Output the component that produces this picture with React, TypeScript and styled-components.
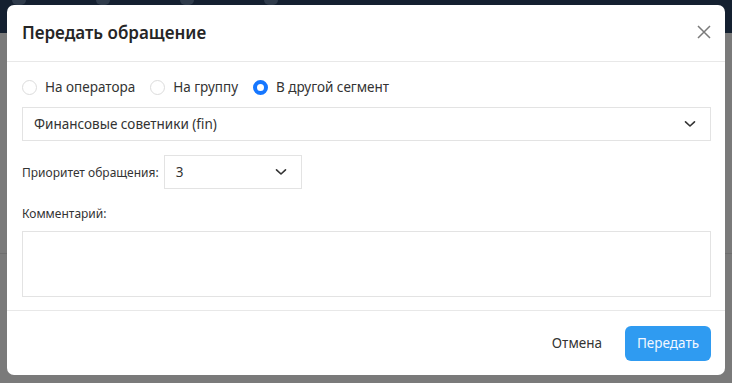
import React from "react";
import styled, { createGlobalStyle } from "styled-components";

const Global = createGlobalStyle`
  html, body { margin: 0; padding: 0; }
  body { font-family: "Segoe UI", "Noto Sans", "Open Sans", sans-serif; width: 732px; height: 383px; overflow: hidden; }
  * { box-sizing: border-box; }
`;

const Page = styled.div`
  position: relative;
  width: 732px;
  height: 383px;
  display: flex;
  flex-direction: column;
  background: #7a7a7a;
`;

const TopBar = styled.div`
  height: 33px;
  background: #142030;
  display: flex;
  align-items: flex-start;
  gap: 70px;
  padding-left: 12px;
`;

const TopIcon = styled.div`
  width: 14px;
  height: 5px;
  border-radius: 0 0 6px 6px;
  background: #2f3b4b;
`;

const BackBody = styled.div`
  flex: 1;
  display: flex;
  flex-direction: column;
`;

const BackLine = styled.div`
  height: 1px;
  margin-top: 220px;
  background: #6e6e6e;
`;

const Modal = styled.div`
  position: absolute;
  left: 7px;
  top: 5px;
  width: 718px;
  height: 370px;
  background: #fff;
  border-radius: 7px;
  display: flex;
  flex-direction: column;
  color: #262626;
`;

const Header = styled.div`
  height: 57px;
  display: flex;
  align-items: center;
  justify-content: space-between;
  padding: 0 12px 2px 15px;
  border-bottom: 1px solid #e8e8e8;
`;

const Title = styled.h2`
  margin: 0;
  font-size: 17px;
  font-weight: 600;
  color: #262626;
`;

const Close = styled.button`
  border: none;
  background: none;
  padding: 0;
  width: 18px;
  height: 18px;
  display: flex;
  cursor: pointer;
`;

const Body = styled.div`
  flex: 1;
  display: flex;
  flex-direction: column;
  padding: 15px 14px 0 15px;
  border-bottom: 1px solid #e8e8e8;
`;

const RadioRow = styled.div`
  display: flex;
  align-items: center;
  gap: 15px;
  height: 20px;
  margin-bottom: 10px;
`;

const RadioItem = styled.label`
  display: flex;
  align-items: center;
  gap: 8px;
  font-size: 13.5px;
  color: #333;
`;

const RadioDot = styled.span<{ $checked?: boolean }>`
  width: 15px;
  height: 15px;
  border-radius: 50%;
  border: ${(p) => (p.$checked ? "4px solid #1677ff" : "1px solid #dcdcdc")};
  background: #fff;
`;

const Select = styled.div<{ $w?: string }>`
  width: ${(p) => p.$w || "100%"};
  height: 34px;
  border: 1px solid #e3e3e3;
  display: flex;
  align-items: center;
  justify-content: space-between;
  padding: 0 14px 0 11px;
  font-size: 13.5px;
  color: #333;
`;

const FieldRow = styled.div`
  display: flex;
  align-items: center;
  gap: 5px;
  margin-top: 14px;
`;

const Label = styled.div`
  font-size: 12px;
  color: #333;
`;

const CommentLabel = styled(Label)`
  margin-top: 16px;
  margin-bottom: 9px;
`;

const TextArea = styled.div`
  height: 66px;
  border: 1px solid #e3e3e3;
`;

const Footer = styled.div`
  height: 64px;
  display: flex;
  align-items: center;
  justify-content: flex-end;
  gap: 23px;
  padding: 0 14px 0 0;
`;

const CancelBtn = styled.button`
  border: none;
  background: none;
  font-family: inherit;
  font-size: 13.5px;
  color: #333;
  padding: 0;
`;

const PrimaryBtn = styled.button`
  border: none;
  background: #2f9bf1;
  color: #f2f7ff;
  border-radius: 6px;
  height: 35px;
  width: 86px;
  font-family: inherit;
  font-size: 13.5px;
`;

const Chevron = () => (
  <svg width="12" height="8" viewBox="0 0 12 8" fill="none">
    <path d="M1.5 1.8 L6 6 L10.5 1.8" stroke="#333" strokeWidth="1.6" strokeLinecap="round" strokeLinejoin="round" />
  </svg>
);

export default function App() {
  return (
    <Page>
      <Global />
      <TopBar>
        <TopIcon />
        <TopIcon />
        <TopIcon />
        <TopIcon />
      </TopBar>
      <BackBody>
        <BackLine />
      </BackBody>
      <Modal>
        <Header>
          <Title>Передать обращение</Title>
          <Close aria-label="close">
            <svg width="18" height="18" viewBox="0 0 18 18">
              <path d="M3 3 L15 15 M15 3 L3 15" stroke="#7a7a7a" strokeWidth="1.5" />
            </svg>
          </Close>
        </Header>
        <Body>
          <RadioRow>
            <RadioItem><RadioDot />На оператора</RadioItem>
            <RadioItem><RadioDot />На группу</RadioItem>
            <RadioItem><RadioDot $checked />В другой сегмент</RadioItem>
          </RadioRow>
          <Select>
            <span>Финансовые советники (fin)</span>
            <Chevron />
          </Select>
          <FieldRow>
            <Label>Приоритет обращения:</Label>
            <Select $w="138px">
              <span>3</span>
              <Chevron />
            </Select>
          </FieldRow>
          <CommentLabel>Комментарий:</CommentLabel>
          <TextArea />
        </Body>
        <Footer>
          <CancelBtn>Отмена</CancelBtn>
          <PrimaryBtn>Передать</PrimaryBtn>
        </Footer>
      </Modal>
    </Page>
  );
}
